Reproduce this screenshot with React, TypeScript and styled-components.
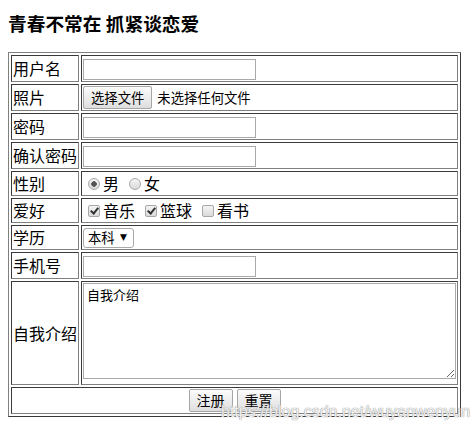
import styled, { createGlobalStyle } from 'styled-components';

const GlobalStyle = createGlobalStyle`
  body {
    margin: 0;
    background: #fff;
    color: #000;
    font-family: "Noto Sans CJK SC", "Liberation Sans", sans-serif;
  }
`;

const Page = styled.div`
  position: relative;
  width: 476px;
  height: 433px;
  box-sizing: border-box;
  padding: 9px 8px 0;
  overflow: hidden;
`;

const Title = styled.h3`
  margin: 0 0 16px;
  font-size: 18.72px;
  line-height: 27px;
  font-weight: bold;
`;

const FormTable = styled.table`
  border-collapse: separate;
  border-spacing: 2px;
  border: 1px solid;
  border-color: #808080 #3a3a3a #3a3a3a #808080;
`;

const Cell = styled.td`
  padding: 1px;
  border: 1px solid;
  border-color: #3a3a3a #808080 #808080 #3a3a3a;
  font-size: 16px;
  line-height: 21px;
  vertical-align: middle;
  white-space: nowrap;
`;

const Field = styled.div<{ $h: number; $align?: string; $justify?: string; $gap?: number }>`
  display: flex;
  height: ${(p) => p.$h}px;
  align-items: ${(p) => p.$align ?? 'center'};
  justify-content: ${(p) => p.$justify ?? 'flex-start'};
  gap: ${(p) => p.$gap ?? 0}px;
`;

const TextInput = styled.input`
  box-sizing: border-box;
  width: 173px;
  height: 21px;
  margin: 0;
  padding: 1px 2px;
  border: 1px solid #a9a9a9;
  font: 13.33px "Noto Sans CJK SC", sans-serif;
`;

const Button = styled.button<{ $size?: number }>`
  box-sizing: border-box;
  height: 23px;
  margin: 0;
  padding: 1px 7px;
  border: 1px solid #a6a6a6;
  border-radius: 2px;
  background: linear-gradient(#fcfcfc, #dedede);
  color: #000;
  font-family: "Noto Sans CJK SC", sans-serif;
  font-size: ${(p) => p.$size ?? 14}px;
  line-height: 19px;
`;

const FileHint = styled.span`
  margin-left: 5px;
  font-size: 13.33px;
`;

const Option = styled.label`
  display: inline-flex;
  align-items: center;
  margin-right: 5px;
`;

const Radio = styled.input.attrs({ type: 'radio' })`
  appearance: none;
  width: 12px;
  height: 12px;
  margin: 0 3px 0 5px;
  border: 1px solid #a8a8a8;
  border-radius: 50%;
  background: linear-gradient(#f4f4f4, #dadada);

  &:checked {
    background: radial-gradient(circle, #555 0 2.5px, transparent 3px),
      linear-gradient(#f4f4f4, #dadada);
  }
`;

const Check = styled.input.attrs({ type: 'checkbox' })`
  appearance: none;
  position: relative;
  width: 12px;
  height: 12px;
  margin: 0 3px 0 5px;
  border: 1px solid #a8a8a8;
  border-radius: 2px;
  background: linear-gradient(#f4f4f4, #dadada);

  &:checked::after {
    content: '';
    position: absolute;
    left: 3px;
    top: 0;
    width: 3px;
    height: 6px;
    border: solid #333;
    border-width: 0 2px 2px 0;
    transform: rotate(40deg);
  }
`;

const SelectWrap = styled.span`
  position: relative;
  display: inline-flex;
`;

const Select = styled.select`
  appearance: none;
  box-sizing: border-box;
  width: 51px;
  height: 20px;
  margin: 0;
  padding: 0 0 0 4px;
  border: 1px solid #a9a9a9;
  border-radius: 3px;
  background: #fff;
  color: #000;
  font: 13.33px/18px "Noto Sans CJK SC", sans-serif;
`;

const Arrow = styled.span`
  position: absolute;
  right: 7px;
  top: 50%;
  transform: translateY(-55%);
  font: 9px/1 "DejaVu Sans", sans-serif;
  pointer-events: none;
`;

const Bio = styled.textarea`
  box-sizing: border-box;
  width: 373px;
  height: 96px;
  margin: 0;
  padding: 2px 3px;
  border: 1px solid #a9a9a9;
  font: 13px/17px "Noto Sans CJK SC", sans-serif;
  resize: both;
`;

const Watermark = styled.div`
  position: absolute;
  left: 221px;
  top: 402px;
  font: 16px/20px "Liberation Sans", Arial, sans-serif;
  color: rgba(255, 255, 255, 0.85);
  text-shadow: 0 0 1px #9a9a9a, 0 0 1px #9a9a9a;
  pointer-events: none;
`;

export default function App() {
  return (
    <Page>
      <GlobalStyle />
      <Title>青春不常在 抓紧谈恋爱</Title>
      <FormTable>
        <tbody>
          <tr>
            <Cell>用户名</Cell>
            <Cell>
              <Field $h={23} $align="flex-end">
                <TextInput type="text" />
              </Field>
            </Cell>
          </tr>
          <tr>
            <Cell>照片</Cell>
            <Cell>
              <Field $h={23}>
                <Button type="button" $size={13.33}>选择文件</Button>
                <FileHint>未选择任何文件</FileHint>
              </Field>
            </Cell>
          </tr>
          <tr>
            <Cell>密码</Cell>
            <Cell>
              <Field $h={23} $align="flex-end">
                <TextInput type="password" />
              </Field>
            </Cell>
          </tr>
          <tr>
            <Cell>确认密码</Cell>
            <Cell>
              <Field $h={23} $align="flex-end">
                <TextInput type="password" />
              </Field>
            </Cell>
          </tr>
          <tr>
            <Cell>性别</Cell>
            <Cell>
              <Field $h={21}>
                <Option>
                  <Radio name="sex" defaultChecked />男
                </Option>
                <Option>
                  <Radio name="sex" />女
                </Option>
              </Field>
            </Cell>
          </tr>
          <tr>
            <Cell>爱好</Cell>
            <Cell>
              <Field $h={21}>
                <Option>
                  <Check defaultChecked />音乐
                </Option>
                <Option>
                  <Check defaultChecked />篮球
                </Option>
                <Option>
                  <Check />看书
                </Option>
              </Field>
            </Cell>
          </tr>
          <tr>
            <Cell>学历</Cell>
            <Cell>
              <Field $h={21}>
                <SelectWrap>
                  <Select defaultValue="本科">
                    <option>专科</option>
                    <option>本科</option>
                    <option>硕士</option>
                  </Select>
                  <Arrow>▼</Arrow>
                </SelectWrap>
              </Field>
            </Cell>
          </tr>
          <tr>
            <Cell>手机号</Cell>
            <Cell>
              <Field $h={23} $align="flex-end">
                <TextInput type="text" />
              </Field>
            </Cell>
          </tr>
          <tr>
            <Cell>自我介绍</Cell>
            <Cell>
              <Field $h={100} $align="flex-start">
                <Bio defaultValue="自我介绍" />
              </Field>
            </Cell>
          </tr>
          <tr>
            <Cell colSpan={2}>
              <Field $h={23} $justify="center" $gap={4}>
                <Button type="submit">注册</Button>
                <Button type="reset">重置</Button>
              </Field>
            </Cell>
          </tr>
        </tbody>
      </FormTable>
      <Watermark>https://blog.csdn.net/wuyanwenyun</Watermark>
    </Page>
  );
}
